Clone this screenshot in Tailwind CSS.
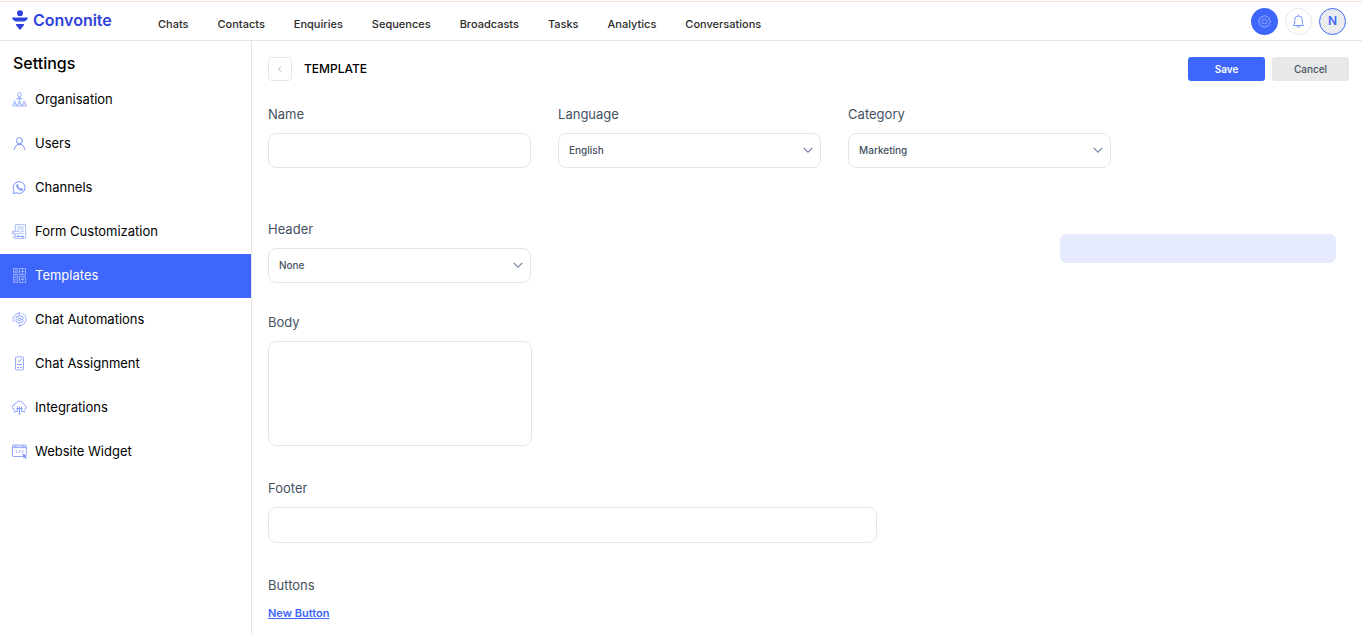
<!DOCTYPE html>
<html lang="en">
<head>
    <meta charset="UTF-8">
    <meta name="viewport" content="width=device-width, initial-scale=1.0">
    <title>Convonite - Template</title>
    <script src="https://cdn.jsdelivr.net/npm/@tailwindcss/browser@4"></script>
</head>
<body class="bg-white font-['Inter','Liberation_Sans',sans-serif] text-black min-h-screen flex flex-col">
  <!-- top bar -->
  <header class="mt-px h-10 border-t border-t-[#f3dfd3] border-b border-b-[#e6e6e6] flex items-center pl-3 pr-4 shrink-0">
    <a href="/" class="flex items-center gap-[5px] text-[#2f43dc] w-[146px] h-full pb-0.5">
      <svg class="w-4 h-5" viewBox="0 0 16 20" fill="currentColor">
        <circle cx="8" cy="3.2" r="3"/>
        <path d="M1 7.6H15C16 7.6 16.1 8.6 15.4 9.2L13.6 10.8Q12.8 11.4 12 11.4H4Q3.2 11.4 2.4 10.8L.6 9.2C-.1 8.6 0 7.6 1 7.6Z"/>
        <path d="M4.6 14H11.4Q12.6 14 11.8 15.2L9 19Q8 20 7 19L4.2 15.2Q3.4 14 4.6 14Z"/>
      </svg>
      <span class="text-base font-semibold">Convonite</span>
    </a>
    <nav class="flex-1 flex gap-[29px] pt-1.5 text-[11px] leading-4 font-medium text-[#2b2b2b]">
      <a href="/chats">Chats</a>
      <a href="/contacts">Contacts</a>
      <a href="/enquiries">Enquiries</a>
      <a href="/sequences">Sequences</a>
      <a href="/broadcasts">Broadcasts</a>
      <a href="/tasks">Tasks</a>
      <a href="/analytics">Analytics</a>
      <a href="/conversations">Conversations</a>
    </nav>
    <div class="flex items-center gap-[7px]">
      <button type="button" aria-label="Settings" class="w-[27px] h-[27px] rounded-full bg-[#3e66fb] flex items-center justify-center">
        <svg class="w-[13px] h-[13px]" viewBox="0 0 14 14" fill="none" stroke="#9fb2ff" stroke-width=".9" stroke-linejoin="round">
          <path d="M5.4 2.1 5.8.8H8.2L8.6 2.1 9.6 2.5 10.8 1.8 12.3 3.3 11.6 4.5 12 5.5 13.2 5.8V8.2L12 8.6 11.6 9.6 12.3 10.8 10.8 12.3 9.6 11.6 8.6 12 8.2 13.2H5.8L5.4 12 4.4 11.6 3.2 12.3 1.7 10.8 2.4 9.6 2 8.6.8 8.2V5.8L2 5.5 2.4 4.5 1.7 3.3 3.2 1.8 4.4 2.5Z"/>
          <circle cx="7" cy="7" r="2.5"/>
        </svg>
      </button>
      <button type="button" aria-label="Notifications" class="w-[27px] h-[27px] rounded-full border border-[#e6e6e6] flex items-center justify-center">
        <svg class="w-[13px] h-[15px]" viewBox="0 0 12 15" fill="none" stroke="#7f9bff" stroke-linecap="round" stroke-linejoin="round">
          <path d="M6 1V2M2.2 9V5.8A3.8 3.8 0 0 1 9.8 5.8V9Q9.9 10.5 11.3 11.5H.7Q2.1 10.5 2.2 9ZM4.5 11.8Q4.7 13.6 6 13.6T7.5 11.8"/>
        </svg>
      </button>
      <button type="button" class="w-[27px] h-[27px] rounded-full border border-[#3e66fb] bg-[#ececef] text-[#3e66fb] text-xs font-semibold">N</button>
    </div>
  </header>

  <div class="flex flex-1">
    <!-- settings menu -->
    <aside class="w-[252px] shrink-0 border-r border-[#e6e6e6]">
      <h2 class="h-[37px] pt-2.5 pl-[13px] text-base leading-6 font-medium">Settings</h2>
      <nav class="text-[13px] leading-[21px]">
        <a href="/settings/organisation" class="h-11 pl-3 pb-px flex items-center gap-2">
          <svg class="w-[15px] h-[15px]" viewBox="0 0 15 15" fill="none" stroke="#8ba2fb" stroke-width=".8">
            <circle cx="7.5" cy="2.6" r="1.9"/><path d="M7.5 4.5V9.2M4.2 6.9H10.8M5.8 6.9Q5.8 5 7.5 5T9.2 6.9"/>
            <circle cx="2.7" cy="10.4" r="1.2"/><circle cx="7.5" cy="10.4" r="1.2"/><circle cx="12.3" cy="10.4" r="1.2"/>
            <path d="M.6 14Q.6 11.7 2.7 11.7T5 14ZM5.4 14Q5.4 11.7 7.5 11.7T9.7 14ZM10.1 14Q10.1 11.7 12.3 11.7T14.4 14Z"/>
          </svg>
          Organisation
        </a>
        <a href="/settings/users" class="h-11 pl-3 pb-px flex items-center gap-2">
          <svg class="w-[15px] h-[15px]" viewBox="0 0 15 15" fill="none" stroke="#7591fb" stroke-linecap="round">
            <circle cx="7.5" cy="4.6" r="3"/><path d="M2.2 13.4Q2.4 10.2 5.8 8.4L6.5 7.6M12.8 13.4Q12.6 10.2 9.2 8.4L8.5 7.6M5.8 8.4Q7.5 9.2 9.2 8.4"/>
          </svg>
          Users
        </a>
        <a href="/settings/channels" class="h-11 pl-3 pb-px flex items-center gap-2">
          <svg class="w-[15px] h-[15px]" viewBox="0 0 15 15" fill="none" stroke="#7591fb" stroke-linejoin="round">
            <path d="M1.2 13.6 2 10.4A5.9 5.9 0 1 1 4.5 12.8Z"/>
            <path d="M5.2 4.2Q3.9 5 4.6 6.8 6 9.9 9 10.6 10.6 10.7 10.9 9.2L9.2 8.2 8.3 9Q6.6 8.2 5.9 6.6L6.6 5.9Z" fill="#7591fb" stroke-width=".4"/>
          </svg>
          Channels
        </a>
        <a href="/settings/forms" class="h-11 pl-3 pb-px flex items-center gap-2">
          <svg class="w-[15px] h-[15px]" viewBox="0 0 15 15" fill="none" stroke="#a3b5fc" stroke-width=".9" stroke-linejoin="round">
            <path d="M3.4 7V.6H13.6V12.6M3.4 10V12.5M5.2 3H11.8M5.2 5H11.8M9 7.2H11.8M9 9.4H11.8"/>
            <path d="M.5 7.3H7L8.6 8.6 7 9.9H.5ZM2 7.3V9.9"/>
            <path d="M1.4 12.6H10.8Q11 14.5 12.4 14.5H3Q1.4 14.5 1.4 12.6ZM12.4 14.5Q13.8 14.4 13.8 12.6"/>
            <path d="M5 12.3H7.8M9 12.3H12" stroke="#5f7ffb"/>
          </svg>
          Form Customization
        </a>
        <a href="/settings/templates" class="h-11 pl-3 pb-px flex items-center gap-2 bg-[#3e66fb] text-white">
          <svg class="w-[15px] h-[15px]" viewBox="0 0 15 15" fill="none" stroke="#a9baff" stroke-width=".8">
            <path d="M1.5.5H5.7V4.7H1.5ZM7.5.5H13.5V6.5H7.5ZM1.5 6.3H5.7V14.5H1.5ZM7.5 8.3H13.5V14.5H7.5Z"/>
            <path d="M2.6 2H4.6M2.6 3.3H4.6M10.5 .5V6.5M8.6 3.5H12.4M2.6 8H4.6M2.6 9.6H4.6M2.6 11.2H4.6M2.6 12.8H4.6M8.8 10H12.2M8.8 11.5H12.2M10.5 11.5V13.4"/>
          </svg>
          Templates
        </a>
        <a href="/settings/automations" class="h-11 pl-3 pb-px flex items-center gap-2">
          <svg class="w-[15px] h-[15px]" viewBox="0 0 15 15" fill="none" stroke="#7591fb" stroke-width=".8" stroke-linejoin="round" stroke-linecap="round">
            <path d="M6.6 3.6H8.4L9 4.6 10.4 4.6 11.2 6.2 10.6 7.4 11.2 8.6 10.3 10.1 9 10.1 8.3 11.2H6.6L5.9 10.1 4.6 10 3.8 8.5 4.4 7.4 3.8 6.2 4.7 4.6 6 4.6Z"/>
            <circle cx="7.5" cy="7.4" r="1.5"/>
            <path d="M1.2 9.2A6.4 6.4 0 0 1 7.8 1.1M7.8 1.1 6.9.4M7.8 1.1 6.9 2M13.8 5.6A6.4 6.4 0 0 1 7.2 13.8M7.2 13.8 8 13M7.2 13.8 8 14.6M10.8 1.6 13.6 4.2"/>
          </svg>
          Chat Automations
        </a>
        <a href="/settings/assignment" class="h-11 pl-3 pb-px flex items-center gap-2">
          <svg class="w-[15px] h-[15px]" viewBox="0 0 15 15" fill="none" stroke="#8ba2fb" stroke-width=".9" stroke-linejoin="round">
            <rect x="3.5" y=".9" width="8" height="13" rx=".8"/>
            <path d="M6 4.6 7.2 5.8 9.8 3" stroke="#5f7ffb"/>
            <path d="M5.2 8.5H10M5.2 11.5H7M8.2 11.5H10" stroke="#6f8bfb"/>
          </svg>
          Chat Assignment
        </a>
        <a href="/settings/integrations" class="h-11 pl-3 pb-px flex items-center gap-2">
          <svg class="w-[15px] h-[15px]" viewBox="0 0 15 15" fill="none" stroke="#7591fb" stroke-width=".8" stroke-linejoin="round">
            <path d="M3 9.4H2.6A2.2 2.2 0 0 1 2.4 5 2.6 2.6 0 0 1 4.6 2.7 3.7 3.7 0 0 1 11 3.4 2.6 2.6 0 0 1 12.8 5.2 2.2 2.2 0 0 1 12.4 9.4H12"/>
            <path d="M5.5 6.5V11.5H3.4M7.5 6.5V13.2M9.5 6.5V11.5H11.6M4.4 8.5H10.6"/>
            <circle cx="2.8" cy="11.6" r=".6"/><circle cx="7.5" cy="13.8" r=".6"/><circle cx="12.2" cy="11.6" r=".6"/>
          </svg>
          Integrations
        </a>
        <a href="/settings/widget" class="h-11 pl-3 pb-px flex items-center gap-2">
          <svg class="w-[15px] h-[15px]" viewBox="0 0 15 15" fill="none" stroke="#7591fb" stroke-width=".8" stroke-linejoin="round">
            <path d="M10.8 12.5H1.2Q.5 12.5 .5 11.8V1.7Q.5 1 1.2 1H13.6Q14.3 1 14.3 1.7V10.4M.5 3.6H14.3M1.8 2.3H5M6.5 2.3H7.5M9 2.3H13"/>
            <path d="M5 6.4 3.7 7.6 5 8.8M10 6.4 11.3 7.6 10 8.8M8.2 6 6.8 9.2"/>
            <path d="M10.8 10.2 14.2 11.6 13 12.2 14.2 13.8 13.5 14.4 12.4 12.8 11.7 13.6Z" fill="#7591fb"/>
          </svg>
          Website Widget
        </a>
      </nav>
    </aside>

    <!-- template form -->
    <main class="flex-1 pt-4 pl-4 pr-[13px]">
      <form>
        <div class="flex items-center h-6">
          <button type="button" aria-label="Back" class="w-6 h-6 rounded-sm border border-[#e6e6e6] flex items-center justify-center">
            <svg class="w-2 h-2" viewBox="0 0 8 8" fill="none" stroke="#a3adbd"><path d="M5 1.5 2.6 4 5 6.5"/></svg>
          </button>
          <h1 class="ml-3 flex-1 text-xs leading-6 font-medium">TEMPLATE</h1>
          <div class="flex gap-[7px] text-[10px]">
            <button type="submit" class="w-[77px] h-6 rounded-[3px] bg-[#3e66fb] text-white font-semibold">Save</button>
            <button type="button" class="w-[77px] h-6 rounded-[3px] bg-[#e8e8e8] text-[#45525f] font-medium">Cancel</button>
          </div>
        </div>

        <div class="mt-[23px] w-[78%] grid grid-cols-3 gap-[27px] text-[#44525f]">
          <div>
            <label for="name" class="block mb-[9px] text-[13px] leading-5">Name</label>
            <input id="name" type="text" class="block w-full h-[35px] px-2.5 border border-[#e6e6e6] rounded-lg text-[10px]">
          </div>
          <div>
            <label for="language" class="block mb-[9px] text-[13px] leading-5">Language</label>
            <div class="relative">
              <select id="language" class="appearance-none block w-full h-[35px] px-2.5 border border-[#e6e6e6] rounded-lg text-[10px] font-medium">
                <option>English</option>
              </select>
              <svg class="absolute right-2 top-3 w-2.5 h-2.5 pointer-events-none" viewBox="0 0 10 10" fill="none" stroke="#7d8aa8" stroke-width="1.2"><path d="M.8 3 5 7.2 9.2 3"/></svg>
            </div>
          </div>
          <div>
            <label for="category" class="block mb-[9px] text-[13px] leading-5">Category</label>
            <div class="relative">
              <select id="category" class="appearance-none block w-full h-[35px] px-2.5 border border-[#e6e6e6] rounded-lg text-[10px] font-medium">
                <option>Marketing</option>
              </select>
              <svg class="absolute right-2 top-3 w-2.5 h-2.5 pointer-events-none" viewBox="0 0 10 10" fill="none" stroke="#7d8aa8" stroke-width="1.2"><path d="M.8 3 5 7.2 9.2 3"/></svg>
            </div>
          </div>
        </div>

        <div class="mt-[51px] flex justify-between items-start text-[#44525f]">
          <div class="w-[609px]">
            <label for="header" class="block mb-[9px] text-[13px] leading-5">Header</label>
            <div class="relative w-[263px]">
              <select id="header" class="appearance-none block w-full h-[35px] px-2.5 border border-[#e6e6e6] rounded-lg text-[10px] font-medium">
                <option>None</option>
              </select>
              <svg class="absolute right-2 top-3 w-2.5 h-2.5 pointer-events-none" viewBox="0 0 10 10" fill="none" stroke="#7d8aa8" stroke-width="1.2"><path d="M.8 3 5 7.2 9.2 3"/></svg>
            </div>

            <label for="body" class="block mt-[29px] mb-[9px] text-[13px] leading-5">Body</label>
            <textarea id="body" class="block w-[264px] h-[105px] p-2.5 border border-[#e6e6e6] rounded-lg text-[10px] resize-none"></textarea>

            <label for="footer" class="block mt-8 mb-[9px] text-[13px] leading-5">Footer</label>
            <input id="footer" type="text" class="block w-full h-9 px-2.5 border border-[#e6e6e6] rounded-lg text-[10px]">

            <h3 class="mt-8 text-[13px] leading-5">Buttons</h3>
            <button type="button" class="block mt-2.5 text-[11px] leading-4 font-semibold text-[#3e66fb] underline">New Button</button>
          </div>
          <!-- message preview -->
          <div class="mt-[15px] mr-[13px] w-[276px] h-[29px] rounded-md bg-[#e5eaff]"></div>
        </div>
      </form>
    </main>
  </div>
</body>
</html>
